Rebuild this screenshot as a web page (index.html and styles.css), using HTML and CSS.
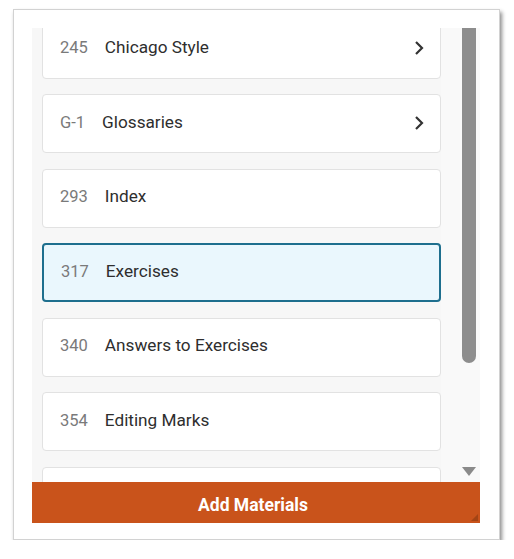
FILE: index.html
```html
<!DOCTYPE html>
<html>
<head>
<meta charset="utf-8">
<link rel="stylesheet" href="styles.css">
</head>
<body>
<div class="frame">
  <div class="panel">
    <div class="viewport">
      <div class="list">
        <div class="card"><span class="label"><span class="num">245</span><span class="title">Chicago Style</span></span><svg class="chev" width="10" height="16" viewBox="0 0 10 16"><path d="M2 2 L8 8 L2 14" fill="none" stroke="#333" stroke-width="2.2"/></svg></div>
        <div class="card"><span class="label"><span class="num">G-1</span><span class="title">Glossaries</span></span><svg class="chev" width="10" height="16" viewBox="0 0 10 16"><path d="M2 2 L8 8 L2 14" fill="none" stroke="#333" stroke-width="2.2"/></svg></div>
        <div class="card"><span class="label"><span class="num">293</span><span class="title">Index</span></span></div>
        <div class="card selected"><span class="label"><span class="num">317</span><span class="title">Exercises</span></span></div>
        <div class="card"><span class="label"><span class="num">340</span><span class="title">Answers to Exercises</span></span></div>
        <div class="card"><span class="label"><span class="num">354</span><span class="title">Editing Marks</span></span></div>
        <div class="card"><span class="label"><span class="num">&nbsp;</span><span class="title">&nbsp;</span></span></div>
      </div>
      <div class="track">
        <div class="thumb"></div>
        <div class="arrow"></div>
      </div>
    </div>
    <div class="button">Add Materials<span class="grip"></span></div>
  </div>
</div>
</body>
</html>
```
FILE: styles.css
```css
html, body {
  margin: 0;
  background: #ffffff;
  font-family: Roboto, "Liberation Sans", sans-serif;
}
.frame {
  margin: 9px 0 0 13px;
  width: 487px;
  height: 531px;
  box-sizing: border-box;
  border: 1px solid #d2d2d2;
  background: #ffffff;
  box-shadow: 2px 3px 4px rgba(0, 0, 0, 0.45);
  padding: 18px 19px 16px 18px;
}
.panel {
  display: flex;
  flex-direction: column;
  height: 495px;
  background: #f7f7f7;
}
.viewport {
  height: 454px;
  display: flex;
  overflow: hidden;
}
.list {
  width: 409px;
  box-sizing: border-box;
  padding-left: 10px;
  display: flex;
  flex-direction: column;
  gap: 15.5px;
  margin-top: -8.5px;
}
.card {
  flex: none;
  height: 59px;
  box-sizing: border-box;
  border: 1px solid #e2e2e2;
  border-radius: 4px;
  background: #ffffff;
  display: flex;
  align-items: center;
  padding: 0 16px 3px 17px;
}
.card.selected {
  border: 2px solid #1e6f8e;
  background: #eaf7fd;
  padding-left: 17px;
}
.label {
  line-height: 22px;
  white-space: nowrap;
}
.num {
  color: #7a7a7a;
  font-size: 16.5px;
  margin-right: 17px;
}
.title {
  color: #2e2e2e;
  font-size: 17.2px;
}
.chev {
  margin-left: auto;
  margin-top: 1px;
}
.track {
  width: 39px;
  display: flex;
  flex-direction: column;
  justify-content: space-between;
  background: #f9f9f9;
}
.thumb {
  margin-left: 21px;
  width: 14px;
  height: 335px;
  background: #8d8d8d;
  border-radius: 0 0 7px 7px;
}
.arrow {
  margin: 0 0 6px 21px;
  width: 0;
  height: 0;
  border-left: 7px solid transparent;
  border-right: 7px solid transparent;
  border-top: 9px solid #8a8a8a;
}
.button {
  position: relative;
  height: 41px;
  box-sizing: border-box;
  padding: 4px 6px 0 0;
  background: #c9531b;
  color: #ffffff;
  font-weight: bold;
  font-size: 17.5px;
  display: flex;
  align-items: center;
  justify-content: center;
}
.grip {
  position: absolute;
  right: 2px;
  bottom: 2px;
  width: 0;
  height: 0;
  border-left: 7px solid transparent;
  border-bottom: 7px solid #8a3a12;
  opacity: 0.6;
}
```
